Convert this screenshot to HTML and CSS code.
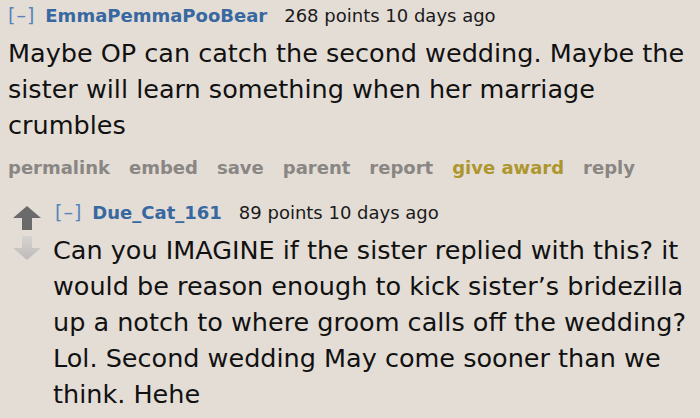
FILE: index.html
```html
<!DOCTYPE html>
<html>
<head>
<meta charset="utf-8">
<link rel="stylesheet" href="styles.css">
</head>
<body>
<div class="comment">
  <div class="tagline">
    <span class="toggle">[–]</span>
    <span class="author">EmmaPemmaPooBear</span>
    <span class="score">268 points 10 days ago</span>
  </div>
  <p class="body">Maybe OP can catch the second wedding. Maybe the sister will learn something when her marriage crumbles</p>
  <ul class="buttons">
    <li>permalink</li>
    <li>embed</li>
    <li>save</li>
    <li>parent</li>
    <li>report</li>
    <li class="gold">give award</li>
    <li>reply</li>
  </ul>
  <div class="child">
    <div class="votes">
      <svg class="arrow" width="28" height="24" viewBox="0 0 28 24"><path d="M14 0 L28 12 L19 12 L19 24 L9 24 L9 12 L0 12 Z" fill="#6a6a6a"/></svg>
      <svg class="arrow" width="28" height="24" viewBox="0 0 28 24"><defs><linearGradient id="dg" x1="0" y1="0" x2="0" y2="1"><stop offset="0" stop-color="#d6d3d0"/><stop offset="1" stop-color="#bdbbb9"/></linearGradient></defs><path d="M14 24 L28 12 L19 12 L19 0 L9 0 L9 12 L0 12 Z" fill="url(#dg)"/></svg>
    </div>
    <div class="entry">
      <div class="tagline">
        <span class="toggle">[–]</span>
        <span class="author">Due_Cat_161</span>
        <span class="score">89 points 10 days ago</span>
      </div>
      <p class="body child-body">Can you IMAGINE if the sister replied with this? it would be reason enough to kick sister’s bridezilla up a notch to where groom calls off the wedding? Lol. Second wedding May come sooner than we think. Hehe</p>
    </div>
  </div>
</div>
</body>
</html>
```
FILE: styles.css
```css
html, body {
  margin: 0;
  padding: 0;
  background: #e4ddd6;
}
body {
  font-family: "DejaVu Sans", Verdana, sans-serif;
  color: #111;
  width: 700px;
  height: 418px;
  overflow: hidden;
}
.comment {
  padding: 3px 0 0 8px;
}
.tagline {
  font-size: 18px;
  line-height: 24px;
  display: flex;
  align-items: baseline;
  white-space: nowrap;
}
.toggle {
  color: #5585bb;
  margin-right: 10px;
  font-size: 19px;
  letter-spacing: 1px;
}
.author {
  color: #3868a0;
  font-weight: bold;
  margin-right: 17px;
}
.score {
  color: #1a1a1a;
}
.body {
  margin: 7px 0 0 0;
  font-size: 25.5px;
  line-height: 36px;
  width: 690px;
}
.buttons {
  list-style: none;
  margin: 13px 0 0 0;
  padding: 0;
  display: flex;
  gap: 19px;
  font-size: 18px;
  font-weight: bold;
  color: #898683;
  line-height: 24px;
  white-space: nowrap;
}
.buttons .gold {
  color: #ad962d;
}
.child {
  display: flex;
  margin-top: 20px;
}
.votes {
  width: 47px;
  flex: none;
  display: flex;
  flex-direction: column;
  gap: 6px;
  padding-top: 6px;
  padding-left: 5px;
  box-sizing: border-box;
}
.entry {
  flex: 1;
  min-width: 0;
}
.child-body {
  margin: 7px 0 0 -2px;
  width: 650px;
}
```
